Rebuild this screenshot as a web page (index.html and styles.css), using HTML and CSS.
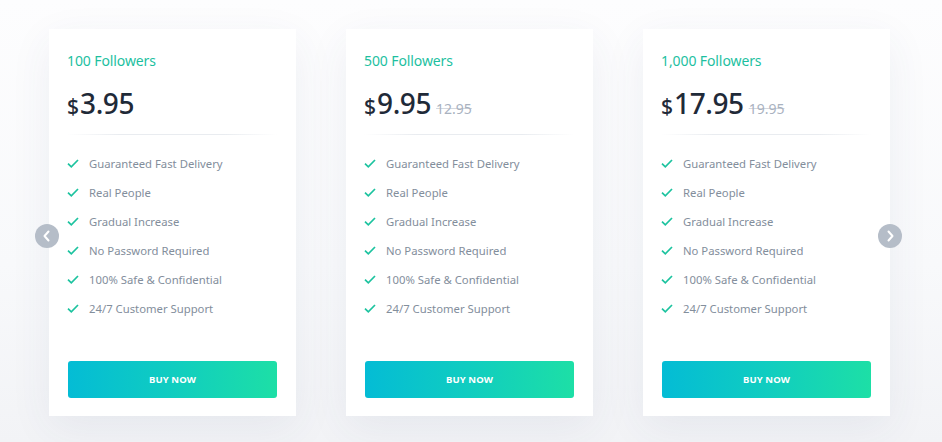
FILE: index.html
```html
<!DOCTYPE html>
<html>
<head>
<meta charset="utf-8">
<link rel="stylesheet" href="styles.css">
</head>
<body>
<div class="slider">
  <div class="track">
    <div class="card">
      <div class="title">100 Followers</div>
      <div class="price"><span class="cur">$</span><span class="amt">3.95</span></div>
      <div class="divider"></div>
      <ul class="features">
        <li><svg viewBox="0 0 12 9" class="check"><path d="M1 4.6 L4.3 7.8 L11 1"/></svg>Guaranteed Fast Delivery</li>
        <li><svg viewBox="0 0 12 9" class="check"><path d="M1 4.6 L4.3 7.8 L11 1"/></svg>Real People</li>
        <li><svg viewBox="0 0 12 9" class="check"><path d="M1 4.6 L4.3 7.8 L11 1"/></svg>Gradual Increase</li>
        <li><svg viewBox="0 0 12 9" class="check"><path d="M1 4.6 L4.3 7.8 L11 1"/></svg>No Password Required</li>
        <li><svg viewBox="0 0 12 9" class="check"><path d="M1 4.6 L4.3 7.8 L11 1"/></svg>100% Safe &amp; Confidential</li>
        <li><svg viewBox="0 0 12 9" class="check"><path d="M1 4.6 L4.3 7.8 L11 1"/></svg>24/7 Customer Support</li>
      </ul>
      <a class="btn">BUY NOW</a>
    </div>
    <div class="card">
      <div class="title">500 Followers</div>
      <div class="price"><span class="cur">$</span><span class="amt">9.95</span><span class="old">12.95</span></div>
      <div class="divider"></div>
      <ul class="features">
        <li><svg viewBox="0 0 12 9" class="check"><path d="M1 4.6 L4.3 7.8 L11 1"/></svg>Guaranteed Fast Delivery</li>
        <li><svg viewBox="0 0 12 9" class="check"><path d="M1 4.6 L4.3 7.8 L11 1"/></svg>Real People</li>
        <li><svg viewBox="0 0 12 9" class="check"><path d="M1 4.6 L4.3 7.8 L11 1"/></svg>Gradual Increase</li>
        <li><svg viewBox="0 0 12 9" class="check"><path d="M1 4.6 L4.3 7.8 L11 1"/></svg>No Password Required</li>
        <li><svg viewBox="0 0 12 9" class="check"><path d="M1 4.6 L4.3 7.8 L11 1"/></svg>100% Safe &amp; Confidential</li>
        <li><svg viewBox="0 0 12 9" class="check"><path d="M1 4.6 L4.3 7.8 L11 1"/></svg>24/7 Customer Support</li>
      </ul>
      <a class="btn">BUY NOW</a>
    </div>
    <div class="card">
      <div class="title">1,000 Followers</div>
      <div class="price"><span class="cur">$</span><span class="amt">17.95</span><span class="old">19.95</span></div>
      <div class="divider"></div>
      <ul class="features">
        <li><svg viewBox="0 0 12 9" class="check"><path d="M1 4.6 L4.3 7.8 L11 1"/></svg>Guaranteed Fast Delivery</li>
        <li><svg viewBox="0 0 12 9" class="check"><path d="M1 4.6 L4.3 7.8 L11 1"/></svg>Real People</li>
        <li><svg viewBox="0 0 12 9" class="check"><path d="M1 4.6 L4.3 7.8 L11 1"/></svg>Gradual Increase</li>
        <li><svg viewBox="0 0 12 9" class="check"><path d="M1 4.6 L4.3 7.8 L11 1"/></svg>No Password Required</li>
        <li><svg viewBox="0 0 12 9" class="check"><path d="M1 4.6 L4.3 7.8 L11 1"/></svg>100% Safe &amp; Confidential</li>
        <li><svg viewBox="0 0 12 9" class="check"><path d="M1 4.6 L4.3 7.8 L11 1"/></svg>24/7 Customer Support</li>
      </ul>
      <a class="btn">BUY NOW</a>
    </div>
  </div>
  <button class="arrow prev"><svg viewBox="0 0 24 24"><path d="M13.5 7.5 L9.5 12 L13.5 16.5"/></svg></button>
  <button class="arrow next"><svg viewBox="0 0 24 24"><path d="M10.5 7.5 L14.5 12 L10.5 16.5"/></svg></button>
</div>
</body>
</html>
```
FILE: styles.css
```css
html, body {
  margin: 0;
  padding: 0;
}
body {
  width: 942px;
  height: 442px;
  overflow: hidden;
  background: linear-gradient(180deg, #fdfdfe 0%, #f8f9fb 60%, #f2f3f6 100%);
  font-family: "Noto Sans", "Open Sans", sans-serif;
}
.slider {
  position: relative;
  height: 442px;
}
.track {
  display: flex;
  gap: 50px;
  padding: 29px 0 0 49px;
}
.card {
  width: 247px;
  height: 387px;
  box-sizing: border-box;
  background: #fff;
  padding: 22px 19px 18px 18px;
  display: flex;
  flex-direction: column;
  box-shadow: 0 12px 40px rgba(60, 75, 110, 0.07);
}
.title {
  font-size: 14px;
  line-height: 20px;
  color: #1dbf9f;
  letter-spacing: -0.1px;
}
.price {
  margin-top: 16px;
  height: 32px;
  display: flex;
  align-items: baseline;
  color: #1f2a38;
  font-weight: 500;
}
.cur {
  font-size: 21px;
  margin-right: 1px;
}
.amt {
  font-size: 28px;
  line-height: 32px;
  letter-spacing: -0.4px;
}
.old {
  font-size: 14px;
  font-weight: 400;
  color: #a9b2bf;
  margin-left: 5px;
  text-decoration: line-through;
  text-decoration-color: rgba(169, 178, 191, 0.5);
}
.divider {
  margin-top: 15px;
  height: 1px;
  background: linear-gradient(90deg, rgba(230, 233, 238, 0) 0%, #e9ecf0 25%, #e9ecf0 75%, rgba(230, 233, 238, 0) 100%);
}
.features {
  list-style: none;
  margin: 14px 0 0;
  padding: 0;
}
.features li {
  height: 29px;
  display: flex;
  align-items: center;
  font-size: 11.3px;
  color: #838e9c;
}
.check {
  width: 12px;
  height: 9px;
  margin-right: 10px;
  flex: none;
}
.check path {
  fill: none;
  stroke: #1cc39f;
  stroke-width: 1.7;
}
.btn {
  margin-top: auto;
  margin-left: 1px;
  height: 37px;
  border-radius: 3px;
  background: linear-gradient(90deg, #04bcd5 0%, #10cdc0 50%, #1ddfa6 100%);
  color: #fff;
  font-weight: 700;
  font-size: 9.5px;
  display: flex;
  align-items: center;
  justify-content: center;
  letter-spacing: 0.1px;
}
.arrow {
  position: absolute;
  top: 224px;
  width: 24px;
  height: 24px;
  border-radius: 50%;
  border: none;
  padding: 0;
  background: #b5bdc8;
  display: flex;
  align-items: center;
  justify-content: center;
}
.arrow svg {
  width: 24px;
  height: 24px;
}
.arrow path {
  fill: none;
  stroke: #fff;
  stroke-width: 2;
  stroke-linecap: round;
  stroke-linejoin: round;
}
.prev {
  left: 35px;
}
.next {
  left: 878px;
}
```
